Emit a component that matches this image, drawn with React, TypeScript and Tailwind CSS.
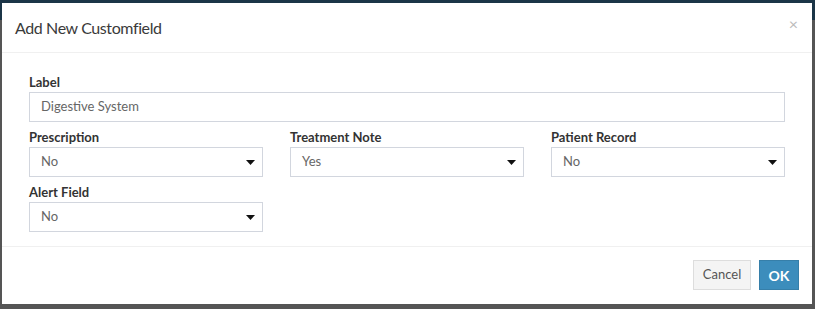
import React from "react";

const font = { fontFamily: "Lato, 'Noto Sans', sans-serif" };

function Select({ value }: { value: string }) {
  return (
    <div className="flex h-[30px] items-center justify-between border border-[#d2d6de] bg-white pl-[11px] pr-[7px] text-[13px] text-[#666]">
      <span>{value}</span>
      <svg width="9" height="5" viewBox="0 0 9 5">
        <path d="M0 0 L9 0 L4.5 5 Z" fill="#111" />
      </svg>
    </div>
  );
}

function Field({ label, value }: { label: string; value: string }) {
  return (
    <div className="flex flex-col">
      <label className="mb-[1px] text-[13px] font-bold leading-[18px] text-[#333]">{label}</label>
      <Select value={value} />
    </div>
  );
}

export default function App() {
  return (
    <div className="relative h-[309px] w-[815px] overflow-hidden bg-[#555555]" style={font}>
      <div className="h-[20px] bg-[#1b3547]" />

      <div className="absolute left-[2px] top-[3px] flex h-[301px] w-[810px] flex-col bg-white">
        <div className="flex h-[50px] items-center justify-between border-b border-[#f0f0f0] pl-[13px] pr-[14px]">
          <h4 className="text-[16px] tracking-[-0.4px] text-[#3a3a3a]">Add New Customfield</h4>
          <span className="mb-[8px] text-[16px] leading-none text-[#bbb]">×</span>
        </div>

        <div className="flex flex-col px-[27px] pt-[20px]">
          <label className="mb-[1px] text-[13px] font-bold leading-[18px] text-[#333]">Label</label>
          <div className="flex h-[30px] items-center border border-[#d2d6de] pl-[11px] text-[13px] text-[#666]">
            Digestive System
          </div>

          <div className="mt-[6px] grid grid-cols-3 gap-x-[27px] gap-y-[6px]">
            <Field label="Prescription" value="No" />
            <Field label="Treatment Note" value="Yes" />
            <Field label="Patient Record" value="No" />
            <Field label="Alert Field" value="No" />
          </div>
        </div>

        <div className="mt-[14px] flex flex-1 items-start justify-end gap-[8px] border-t border-[#f0f0f0] pr-[13px] pt-[13px]">
          <button className="h-[30px] w-[58px] border border-[#ddd] bg-[#f4f4f4] text-[13px] text-[#555]">Cancel</button>
          <button className="h-[30px] w-[40px] border border-[#367fa9] bg-[#3c8dbc] text-[14px] font-bold text-white">OK</button>
        </div>
      </div>
    </div>
  );
}
